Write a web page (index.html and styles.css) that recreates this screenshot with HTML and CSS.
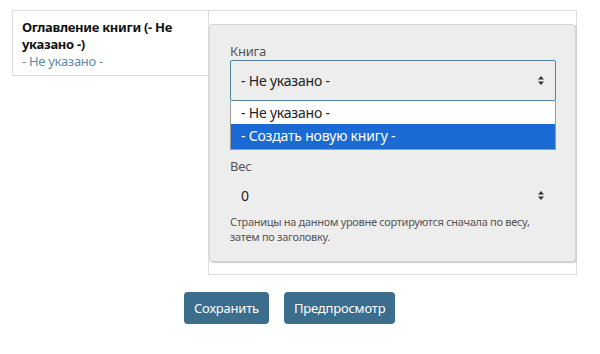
FILE: index.html
```html
<!DOCTYPE html>
<html>
<head>
    <title>Книга</title>
    <link rel="stylesheet" href="styles.css">
</head>
<body>
    <div class="layout">
        <div class="outline">
            <div class="outline-title">Оглавление книги (- Не указано -)</div>
            <a class="outline-link" href="#">- Не указано -</a>
        </div>
        <div class="settings">
            <div class="panel">
                <div class="form-item book-item">
                    <label class="form-label">Книга</label>
                    <div class="select focused">
                        <span>- Не указано -</span>
                        <svg class="arrows" width="6" height="9" viewBox="0 0 6 9"><path d="M3 0L6 3.6H0Z M3 9L0 5.4H6Z" fill="#333"/></svg>
                    </div>
                    <div class="dropdown">
                        <div class="option">- Не указано -</div>
                        <div class="option selected">- Создать новую книгу -</div>
                    </div>
                </div>
                <div class="form-item">
                    <label class="form-label">Вес</label>
                    <div class="select plain">
                        <span>0</span>
                        <svg class="arrows" width="6" height="9" viewBox="0 0 6 9"><path d="M3 0L6 3.6H0Z M3 9L0 5.4H6Z" fill="#333"/></svg>
                    </div>
                    <div class="description">Страницы на данном уровне сортируются сначала по весу, затем по заголовку.</div>
                </div>
            </div>
        </div>
    </div>
    <div class="actions">
        <button class="button">Сохранить</button>
        <button class="button">Предпросмотр</button>
    </div>
</body>
</html>
```

FILE: styles.css
```css
body {
    font-family: 'Noto Sans', 'Open Sans', sans-serif;
    margin: 0;
    padding: 10px 12px;
    background-color: #fff;
    color: #333;
}
.layout {
    display: flex;
    align-items: flex-start;
}
.outline {
    width: 186px;
    padding: 8px 0 5px 9px;
    border: 1px solid #ddd;
    border-right: none;
    font-size: 13px;
    line-height: 17px;
    letter-spacing: -0.3px;
}
.outline-title {
    font-weight: bold;
    color: #111;
}
.outline-link {
    color: #5f8aa8;
    text-decoration: none;
}
.settings {
    width: 367px;
    border: 1px solid #ddd;
    padding: 13px 0 12px 0;
}
.panel {
    background-color: #ededed;
    border: 1px solid #d6d6d6;
    border-radius: 4px;
    box-shadow: 1px 1px 1px #ccc;
    padding: 17px 19px 17px 20px;
    letter-spacing: -0.2px;
}
.form-item {
    position: relative;
}
.book-item {
    margin-bottom: 56px;
}
.form-label {
    display: block;
    font-size: 13px;
    line-height: 18px;
    color: #555;
}
.select {
    display: flex;
    justify-content: space-between;
    align-items: center;
    height: 39px;
    padding: 0 11px 0 10px;
    font-size: 14px;
    color: #222;
    border: 1px solid transparent;
}
.select.focused {
    border-color: #56809c;
    border-radius: 2px;
}
.dropdown {
    position: absolute;
    left: 0;
    right: 0;
    top: 59px;
    background-color: #fff;
    border: 1px solid #9a9a9a;
    border-top: none;
    font-size: 14px;
    color: #222;
}
.option {
    height: 23px;
    line-height: 23px;
    padding-left: 10px;
}
.option.selected {
    height: 25px;
    line-height: 24px;
    background-color: #1b69d3;
    color: #fff;
}
.description {
    font-size: 11px;
    line-height: 15px;
    color: #555;
    margin-top: -2px;
    letter-spacing: -0.3px;
}
.actions {
    display: flex;
    gap: 15px;
    padding: 17px 0 0 172px;
}
.button {
    font-family: 'Noto Sans', 'Open Sans', sans-serif;
    font-size: 13px;
    letter-spacing: -0.2px;
    height: 32px;
    padding: 0 10px;
    border: none;
    border-radius: 4px;
    background-color: #3b6d8c;
    color: #fff;
    cursor: pointer;
}
```
